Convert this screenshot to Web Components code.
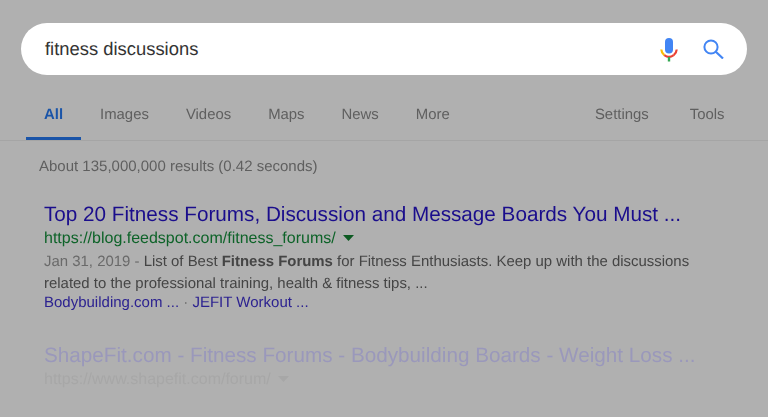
<!DOCTYPE html>
<html>
<head>
<meta charset="utf-8">
<title>fitness discussions</title>
<style>
html, body {
    margin: 0;
    height: 100%;
    background: #b0b0b0;
    overflow: hidden;
    font-family: "Liberation Sans", Arial, sans-serif;
    text-rendering: geometricPrecision;
}
.date {
    color: #6a6a6a;
}
.dot {
    color: #6a6a6a;
}
</style>
</head>
<body>
<serp-page>
    <search-box slot="search" query="fitness discussions"></search-box>
    <nav-tabs slot="tabs"></nav-tabs>
    <div slot="stats">About 135,000,000 results (0.42 seconds)</div>
    <search-result
        title="Top 20 Fitness Forums, Discussion and Message Boards You Must ..."
        url="https://blog.feedspot.com/fitness_forums/">
        <div><span class="date">Jan 31, 2019 - </span>List of Best <b>Fitness Forums</b> for Fitness Enthusiasts. Keep up with the discussions</div>
        <div>related to the professional training, health &amp; fitness tips, ...</div>
        <span slot="links"><a>Bodybuilding.com ...</a> <span class="dot">·</span> <a>JEFIT Workout ...</a></span>
    </search-result>
    <search-result faded
        title="ShapeFit.com - Fitness Forums - Bodybuilding Boards - Weight Loss ..."
        url="https://www.shapefit.com/forum/">
    </search-result>
</serp-page>

<script>
const pageTemplate = document.createElement("template");
pageTemplate.innerHTML = `
<style>
:host {
    display: block;
    width: 768px;
    height: 417px;
    overflow: hidden;
    filter: blur(0.35px);
}
.top {
    padding: 23px 21px 0;
}
.tabs {
    display: block;
    margin-top: 14px;
    border-bottom: 1px solid #a5a5a5;
}
.stats {
    padding: 17px 39px 0;
    font-size: 15px;
    line-height: 17px;
    color: #5f5f5f;
}
.results {
    padding: 28px 44px 0;
    display: flex;
    flex-direction: column;
    gap: 33px;
}
</style>
<div class="top"><slot name="search"></slot></div>
<div class="tabs"><slot name="tabs"></slot></div>
<div class="stats"><slot name="stats"></slot></div>
<div class="results"><slot></slot></div>
`;

class SerpPage extends HTMLElement
{
    constructor()
    {
        super();
        this.attachShadow({ mode: "open" });
        this.shadowRoot.appendChild(pageTemplate.content.cloneNode(true));
    }
}

const searchTemplate = document.createElement("template");
searchTemplate.innerHTML = `
<style>
:host {
    display: flex;
    align-items: center;
    height: 52px;
    background: #fff;
    border-radius: 26px;
    padding: 0 23px 0 24px;
    color: #333;
    font-size: 18.4px;
}
.query {
    flex: 1;
}
svg {
    display: block;
}
.mic {
    margin-right: 25px;
    margin-top: 1px;
}
.glass {
    margin-top: -1px;
}
</style>
<span class="query"></span>
<svg class="mic" width="18" height="24" viewBox="0 0 18 24">
    <rect x="5" y="0" width="8" height="15.5" rx="4" fill="#4285f4"/>
    <path d="M1.3 11.5 a7.7 7.7 0 0 0 3 5.6" fill="none" stroke="#fbbc05" stroke-width="2.2"/>
    <path d="M4.3 17.1 a7.7 7.7 0 0 0 9.4 0" fill="none" stroke="#ea4335" stroke-width="2.2"/>
    <path d="M13.7 17.1 a7.7 7.7 0 0 0 3 -5.6" fill="none" stroke="#ea4335" stroke-width="2.2"/>
    <rect x="7.8" y="19" width="2.4" height="4.5" fill="#34a853"/>
</svg>
<svg class="glass" width="21" height="20" viewBox="0 0 21 20">
    <circle cx="8" cy="8" r="6.6" fill="none" stroke="#4285f4" stroke-width="2"/>
    <path d="M12.8 12.8 L20 19.5" stroke="#4285f4" stroke-width="2.2" fill="none"/>
</svg>
`;

class SearchBox extends HTMLElement
{
    constructor()
    {
        super();
        this.attachShadow({ mode: "open" });
        this.shadowRoot.appendChild(searchTemplate.content.cloneNode(true));
    }

    connectedCallback()
    {
        this.shadowRoot.querySelector(".query").textContent = this.getAttribute("query");
    }
}

const tabsTemplate = document.createElement("template");
tabsTemplate.innerHTML = `
<style>
:host {
    display: flex;
    height: 51px;
    padding-left: 26px;
    padding-right: 43.5px;
    font-size: 14.9px;
    color: #5f5f5f;
}
.tab {
    padding-top: 18px;
    line-height: 17px;
    margin-left: 37px;
}
.active {
    margin-left: 0;
    padding: 18px 18px 0;
    color: #1a54a8;
    font-weight: bold;
    box-shadow: inset 0 -3px 0 #1a54a8;
}
.active + .tab {
    margin-left: 19px;
}
.tab.push {
    margin-left: auto;
}
.tab.last {
    margin-left: 41px;
}
</style>
<div class="tab active">All</div>
<div class="tab">Images</div>
<div class="tab">Videos</div>
<div class="tab">Maps</div>
<div class="tab">News</div>
<div class="tab">More</div>
<div class="tab push">Settings</div>
<div class="tab last">Tools</div>
`;

class NavTabs extends HTMLElement
{
    constructor()
    {
        super();
        this.attachShadow({ mode: "open" });
        this.shadowRoot.appendChild(tabsTemplate.content.cloneNode(true));
    }
}

const resultTemplate = document.createElement("template");
resultTemplate.innerHTML = `
<style>
:host {
    display: block;
    white-space: nowrap;
}
h3 {
    margin: 0;
    font-size: 20.7px;
    font-weight: normal;
    line-height: 24px;
    color: #1a0d8c;
}
.url {
    display: flex;
    align-items: center;
    gap: 7px;
    font-size: 16px;
    line-height: 24px;
    color: #0e6329;
}
.url svg {
    display: block;
    margin-top: -2px;
    color: #0d5a22;
}
.body {
    font-size: 14.95px;
    line-height: 22px;
    color: #454545;
}
.links {
    font-size: 15px;
    line-height: 16px;
    color: #2c2290;
}
:host([faded]) h3 {
    color: #9a98bb;
}
:host([faded]) .url, :host([faded]) .url svg {
    color: #a7a7a7;
}
:host([faded]) .body, :host([faded]) .links {
    display: none;
}
</style>
<h3></h3>
<div class="url">
    <span class="href"></span>
    <svg width="11" height="6" viewBox="0 0 11 6"><path d="M0 0 H11 L5.5 6 Z" fill="currentColor"/></svg>
</div>
<div class="body"><slot></slot></div>
<div class="links"><slot name="links"></slot></div>
`;

class SearchResult extends HTMLElement
{
    constructor()
    {
        super();
        this.attachShadow({ mode: "open" });
        this.shadowRoot.appendChild(resultTemplate.content.cloneNode(true));
    }

    connectedCallback()
    {
        this.shadowRoot.querySelector("h3").textContent = this.getAttribute("title");
        this.shadowRoot.querySelector(".href").textContent = this.getAttribute("url");
    }
}

customElements.define("serp-page", SerpPage);
customElements.define("search-box", SearchBox);
customElements.define("nav-tabs", NavTabs);
customElements.define("search-result", SearchResult);
</script>
</body>
</html>
